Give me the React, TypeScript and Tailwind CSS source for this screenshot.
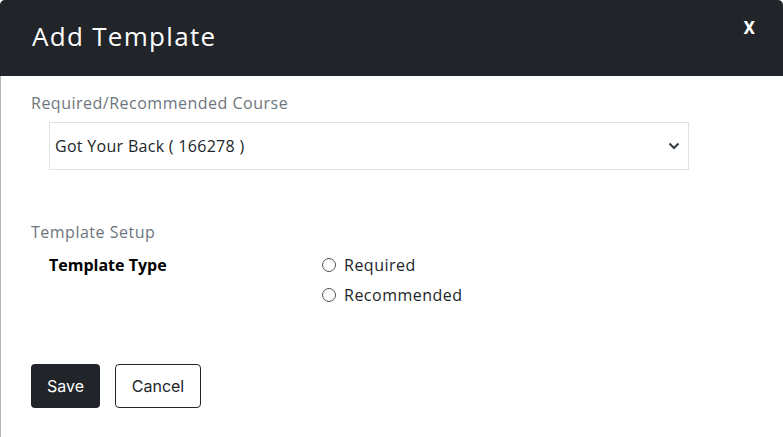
import React from "react";

export default function App() {
  return (
    <div className="w-[783px] h-[437px] bg-white overflow-hidden" style={{ fontFamily: "'Open Sans', sans-serif" }}>
      <div className="h-full flex flex-col border-l border-[#b5b5b5] rounded-t-[5px]">
        <div className="h-[76px] bg-[#212529] rounded-t-[5px] flex items-start justify-between pl-[32px] pr-[28px] -ml-px">
          <div className="text-white text-[26px] leading-none mt-[23px] tracking-[1.3px]" style={{ fontFamily: "'Open Sans', sans-serif" }}>Add Template</div>
          <div className="text-white text-[18px] font-bold leading-none mt-[19px]" style={{ fontFamily: "Roboto, sans-serif" }}>X</div>
        </div>
        <div className="flex flex-col pl-[30px]">
          <div className="text-[16px] tracking-[0.5px] text-[#6c757d] mt-[17px] leading-[20px]">Required/Recommended Course</div>
          <div className="ml-[18px] mt-[9px] w-[640px] h-[48px] border border-[#dee2e6] flex items-center justify-between pl-[5px] pr-[8px]">
            <span className="text-[16px] tracking-[0.3px] text-[#212529]">Got Your Back ( 166278 )</span>
            <svg width="12" height="8" viewBox="0 0 12 8"><path d="M1.5 1.5 L6 6 L10.5 1.5" fill="none" stroke="#343a40" strokeWidth="2" /></svg>
          </div>
          <div className="text-[16px] tracking-[0.5px] text-[#6c757d] mt-[52px] leading-[20px]">Template Setup</div>
          <div className="flex ml-[18px] mt-[13px]">
            <div className="w-[273px] text-[16px] font-bold text-[#000] leading-[20px]">Template Type</div>
            <div className="flex flex-col gap-[10px]">
              <label className="flex items-center gap-[8px] text-[16px] tracking-[0.5px] text-[#212529] leading-[20px]">
                <span className="w-[14px] h-[14px] rounded-full border border-[#555] inline-block" />
                Required
              </label>
              <label className="flex items-center gap-[8px] text-[16px] tracking-[0.5px] text-[#212529] leading-[20px]">
                <span className="w-[14px] h-[14px] rounded-full border border-[#555] inline-block" />
                Recommended
              </label>
            </div>
          </div>
          <div className="flex gap-[15px] mt-[59px]">
            <button className="w-[69px] h-[44px] bg-[#212529] text-white text-[16px] rounded-[4px]" style={{ fontFamily: "Inter, sans-serif" }}>Save</button>
            <button className="w-[86px] h-[44px] border border-[#212529] text-[#212529] text-[16px] rounded-[4px] bg-white" style={{ fontFamily: "Inter, sans-serif" }}>Cancel</button>
          </div>
        </div>
      </div>
    </div>
  );
}
